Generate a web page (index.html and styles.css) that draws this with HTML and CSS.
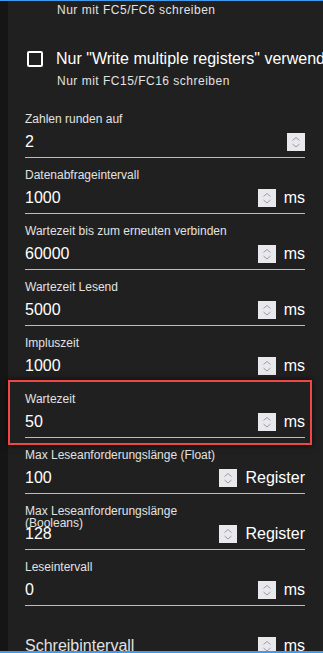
FILE: index.html
```html
<!DOCTYPE html>
<html lang="de">
<head>
<meta charset="utf-8">
<title>Einstellungen</title>
<link rel="stylesheet" href="styles.css">
</head>
<body>
<div class="app">
  <div class="rail"></div>
  <div class="panel">
    <div class="caption caption--top">Nur mit FC5/FC6 schreiben</div>
    <div class="check-row">
      <span class="checkbox"></span>
      <span class="check-label">Nur "Write multiple registers" verwenden</span>
    </div>
    <div class="caption">Nur mit FC15/FC16 schreiben</div>

    <div class="fields">
      <div class="field">
        <div class="field-label">Zahlen runden auf</div>
        <div class="field-row">
          <span class="field-value">2</span>
          <svg class="spin" viewBox="0 0 18 18"><path d="M5.5 7.5 9 4.5 12.5 7.5M5.5 11 9 14 12.5 11"/></svg>
        </div>
      </div>
      <div class="field">
        <div class="field-label">Datenabfrageintervall</div>
        <div class="field-row">
          <span class="field-value">1000</span>
          <svg class="spin" viewBox="0 0 18 18"><path d="M5.5 7.5 9 4.5 12.5 7.5M5.5 11 9 14 12.5 11"/></svg>
          <span class="unit">ms</span>
        </div>
      </div>
      <div class="field">
        <div class="field-label">Wartezeit bis zum erneuten verbinden</div>
        <div class="field-row">
          <span class="field-value">60000</span>
          <svg class="spin" viewBox="0 0 18 18"><path d="M5.5 7.5 9 4.5 12.5 7.5M5.5 11 9 14 12.5 11"/></svg>
          <span class="unit">ms</span>
        </div>
      </div>
      <div class="field">
        <div class="field-label">Wartezeit Lesend</div>
        <div class="field-row">
          <span class="field-value">5000</span>
          <svg class="spin" viewBox="0 0 18 18"><path d="M5.5 7.5 9 4.5 12.5 7.5M5.5 11 9 14 12.5 11"/></svg>
          <span class="unit">ms</span>
        </div>
      </div>
      <div class="field">
        <div class="field-label">Impluszeit</div>
        <div class="field-row">
          <span class="field-value">1000</span>
          <svg class="spin" viewBox="0 0 18 18"><path d="M5.5 7.5 9 4.5 12.5 7.5M5.5 11 9 14 12.5 11"/></svg>
          <span class="unit">ms</span>
        </div>
      </div>
      <div class="field">
        <div class="field-label">Wartezeit</div>
        <div class="field-row">
          <span class="field-value">50</span>
          <svg class="spin" viewBox="0 0 18 18"><path d="M5.5 7.5 9 4.5 12.5 7.5M5.5 11 9 14 12.5 11"/></svg>
          <span class="unit">ms</span>
        </div>
      </div>
      <div class="field field--reg">
        <div class="field-label">Max Leseanforderungslänge (Float)</div>
        <div class="field-row">
          <span class="field-value">100</span>
          <svg class="spin" viewBox="0 0 18 18"><path d="M5.5 7.5 9 4.5 12.5 7.5M5.5 11 9 14 12.5 11"/></svg>
          <span class="unit">Register</span>
        </div>
      </div>
      <div class="field field--reg">
        <div class="field-label">Max Leseanforderungslänge (Booleans)</div>
        <div class="field-row">
          <span class="field-value">128</span>
          <svg class="spin" viewBox="0 0 18 18"><path d="M5.5 7.5 9 4.5 12.5 7.5M5.5 11 9 14 12.5 11"/></svg>
          <span class="unit">Register</span>
        </div>
      </div>
      <div class="field">
        <div class="field-label">Leseintervall</div>
        <div class="field-row">
          <span class="field-value">0</span>
          <svg class="spin" viewBox="0 0 18 18"><path d="M5.5 7.5 9 4.5 12.5 7.5M5.5 11 9 14 12.5 11"/></svg>
          <span class="unit">ms</span>
        </div>
      </div>
      <div class="field field--empty">
        <div class="field-row">
          <span class="field-value field-value--placeholder">Schreibintervall</span>
          <svg class="spin" viewBox="0 0 18 18"><path d="M5.5 7.5 9 4.5 12.5 7.5M5.5 11 9 14 12.5 11"/></svg>
          <span class="unit">ms</span>
        </div>
      </div>
    </div>
  </div>
  <div class="highlight"></div>
</div>
</body>
</html>
```

FILE: styles.css
```css
* {
  box-sizing: border-box;
}

html,
body {
  margin: 0;
  padding: 0;
  background: #202020;
}

body {
  font-family: "Liberation Sans", Arial, sans-serif;
  color: #ffffff;
}

.app {
  position: relative;
  display: flex;
  width: 323px;
  height: 653px;
  border-top: 1px solid #3d9bf0;
  border-bottom: 2px solid #3d9bf0;
  overflow: hidden;
}

.rail {
  flex: 0 0 8px;
  background: #151515;
}

.panel {
  flex: 1;
  min-width: 0;
  background: #202020;
  padding: 0 18px 0 17px;
  overflow: hidden;
}

.caption {
  margin: 3px 0 0 32px;
  font-size: 12px;
  line-height: 14px;
  letter-spacing: 0.5px;
  color: #e2e2e2;
  white-space: nowrap;
}

.caption--top {
  margin-top: 2px;
}

.check-row {
  display: flex;
  align-items: center;
  gap: 13px;
  height: 24px;
  margin-top: 30px;
  padding-left: 2px;
}

.checkbox {
  flex: 0 0 16px;
  width: 16px;
  height: 16px;
  border: 2px solid #ffffff;
  border-radius: 2px;
}

.check-label {
  font-size: 16px;
  line-height: 20px;
  white-space: nowrap;
  color: #ffffff;
}

.fields {
  margin-top: 14px;
}

.field {
  padding-top: 11px;
  border-bottom: 1px solid #bdbdbd;
}

.field--empty {
  padding-top: 24px;
}

.field-label {
  height: 13px;
  font-size: 12px;
  line-height: 12px;
  color: #e2e2e2;
}

.field--reg .field-label {
  max-width: 200px;
}

.field-row {
  display: flex;
  align-items: center;
  height: 31px;
}

.field-value {
  flex: 1;
  font-size: 16px;
  line-height: 20px;
  color: #ffffff;
}

.field-value--placeholder {
  color: #e2e2e2;
}

.spin {
  display: block;
  flex: 0 0 18px;
  width: 18px;
  height: 18px;
  background: #e9e9ed;
}

.spin path {
  fill: none;
  stroke: #9a9aa6;
  stroke-width: 1;
}

.unit {
  margin-left: 8px;
  font-size: 16px;
  line-height: 20px;
  color: #ffffff;
}

.highlight {
  position: absolute;
  left: 8px;
  top: 379px;
  width: 304px;
  height: 65px;
  border: 2px solid #ef4646;
  box-shadow: 0 0 6px rgba(0, 0, 0, 0.7);
  pointer-events: none;
}
```
